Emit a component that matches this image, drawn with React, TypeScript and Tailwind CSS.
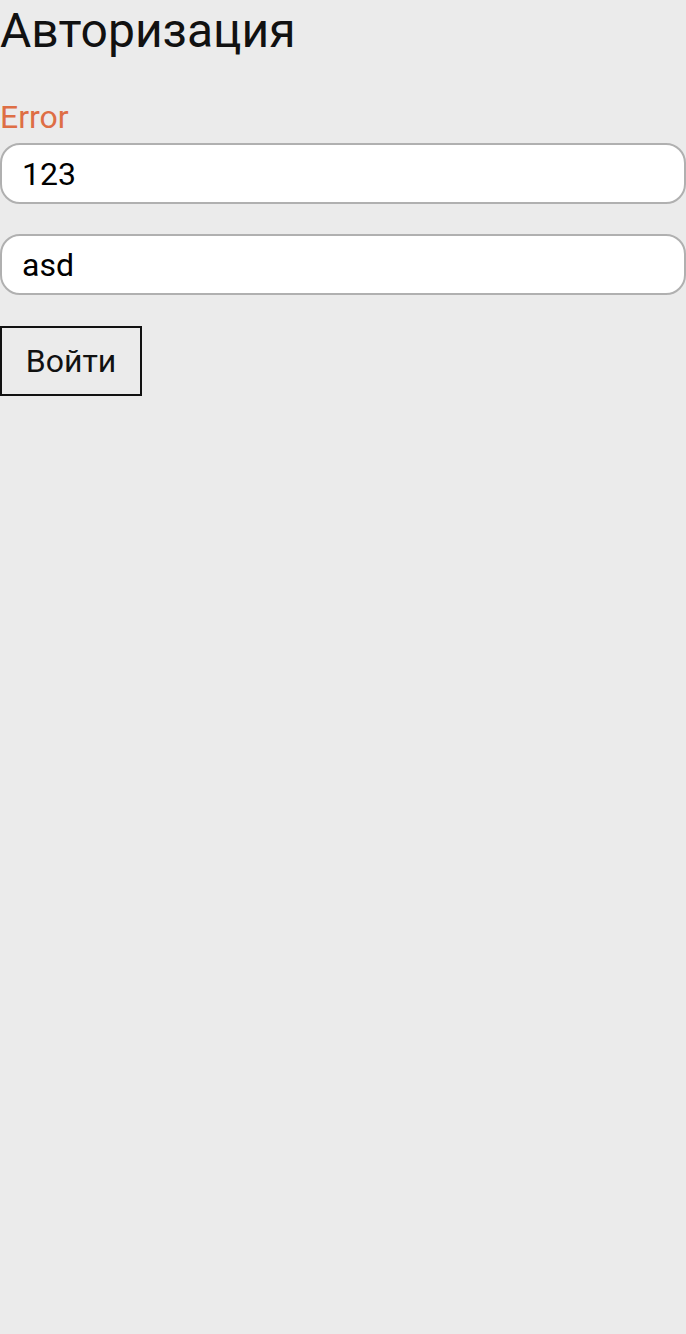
export default function App() {
  return (
    <div className="min-h-[1334px] bg-[#ebebeb] font-['Roboto',sans-serif] text-[#111]">
      <h1 className="text-[48px] leading-[61px] font-normal">Авторизация</h1>
      <div className="mt-[37px] mb-[7px] text-[32px] leading-[38px] text-[#de6e45]">Error</div>
      <input
        className="block w-full h-[61px] rounded-[20px] border-2 border-[#b0b0b0] bg-white px-[20px] text-[32px] text-black outline-none"
        defaultValue="123"
      />
      <input
        className="block mt-[30px] w-full h-[61px] rounded-[20px] border-2 border-[#b0b0b0] bg-white px-[20px] text-[32px] text-black outline-none"
        defaultValue="asd"
      />
      <button className="mt-[31px] block h-[70px] w-[142px] border-2 border-[#111] text-[32px] text-[#111]">
        Войти
      </button>
    </div>
  );
}
